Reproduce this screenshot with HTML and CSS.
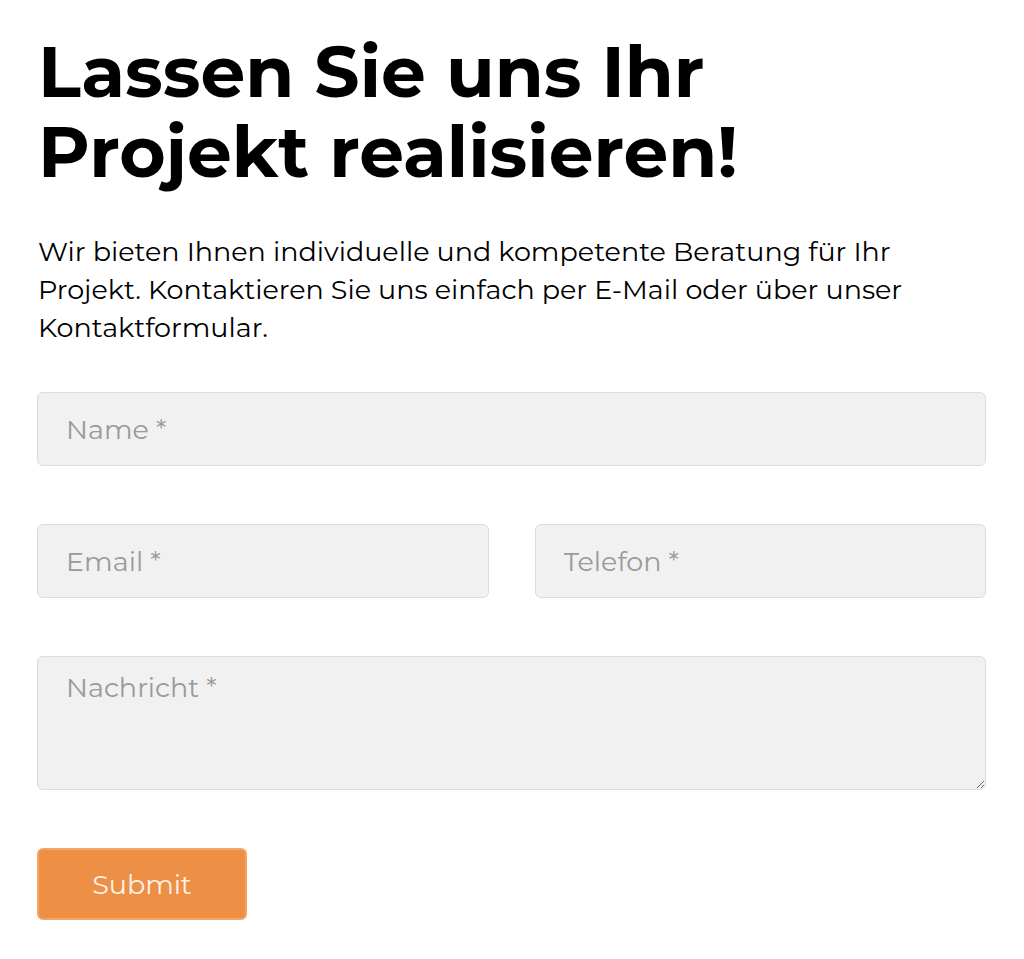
FILE: index.html
```html
<!DOCTYPE html>
<html lang="de">

<head>
  <meta charset="UTF-8">
  <meta name="viewport" content="width=device-width, initial-scale=1.0">
  <title>Kontakt</title>
  <link rel="stylesheet" href="styles.css">
</head>

<body>
  <div class="container">
    <h1>Lassen Sie uns Ihr Projekt realisieren!</h1>
    <p class="intro">Wir bieten Ihnen individuelle und kompetente Beratung für Ihr Projekt. Kontaktieren Sie uns einfach per E-Mail oder über unser Kontaktformular.</p>

    <form class="contact-form">
      <input type="text" placeholder="Name *">
      <div class="row">
        <input type="email" placeholder="Email *">
        <input type="tel" placeholder="Telefon *">
      </div>
      <textarea placeholder="Nachricht *"></textarea>
      <button type="button">Submit</button>
    </form>
  </div>
</body>

</html>
```

FILE: styles.css
```css
body {
  margin: 0;
  padding: 0;
  background: #fff;
  color: #000;
  font-family: Montserrat, Inter, "Noto Sans", sans-serif;
}

.container {
  padding: 32px 38px 30px 37px;
}

h1 {
  margin: 0 0 0 1px;
  font-size: 71px;
  line-height: 80px;
  font-weight: 700;
  max-width: 760px;
}

.intro {
  margin: 41px 0 45px 1px;
  font-size: 27px;
  line-height: 38px;
}

.contact-form {
  display: flex;
  flex-direction: column;
  gap: 58px;
}

.row {
  display: flex;
  gap: 46px;
}

input,
textarea {
  width: 100%;
  box-sizing: border-box;
  height: 74px;
  padding: 0 28px;
  background: #f1f1f1;
  border: 1px solid #dcdcdc;
  border-radius: 6px;
  font-family: inherit;
  font-size: 27px;
  color: #333;
}

textarea {
  height: 134px;
  padding: 14px 28px;
  resize: vertical;
}

::placeholder {
  color: #9a9a9a;
}

button {
  align-self: flex-start;
  width: 210px;
  height: 72px;
  background: #ed8f45;
  border: 2px solid #f3a566;
  border-radius: 6px;
  color: #fdf3ea;
  font-family: inherit;
  font-size: 27px;
  cursor: pointer;
}
```
